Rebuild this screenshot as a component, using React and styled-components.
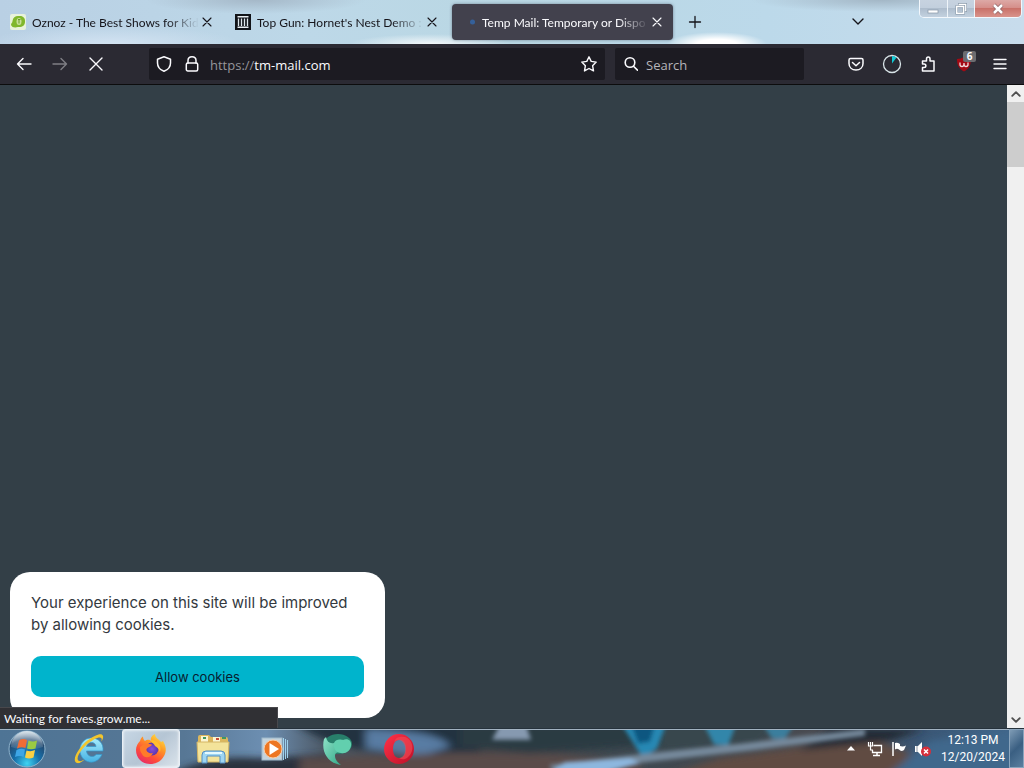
import React from 'react';
import styled, { createGlobalStyle, css } from 'styled-components';

const GlobalStyle = createGlobalStyle`
  * { box-sizing: border-box; }
  body { margin: 0; font-family: Lato, "Open Sans", sans-serif; font-size: 12px; }
  button, input { font: inherit; color: inherit; margin: 0; padding: 0; border: 0; background: none; }
  svg { display: block; flex: none; }
`;

const Desktop = styled.div`
  display: flex;
  flex-direction: column;
  min-height: 100vh;
`;

const TabStrip = styled.header`
  display: flex;
  align-items: flex-start;
  height: 44px;
  padding-left: 2px;
  background:
    radial-gradient(ellipse 130px 18px at 11% 100%, #d3e3f2 0, transparent 100%),
    radial-gradient(ellipse 80px 10px at 42% 100%, #f4f8fa 0, transparent 100%),
    radial-gradient(ellipse 50px 12px at 70% 100%, #ffffff 40%, transparent 100%),
    radial-gradient(ellipse 110px 14px at 25% 0%, #a5b8c8 0, transparent 100%),
    radial-gradient(ellipse 130px 12px at 86% 0%, #a3b7c6 0, transparent 100%),
    linear-gradient(90deg, #b9d0e4 0%, #bdd8e8 30%, #b9d7e3 50%, #bcd9ea 75%, #c8dcec 100%);
`;

const TabList = styled.div`
  display: flex;
  gap: 4px;
  min-width: 0;
  padding-top: 4px;
`;

const Tab = styled.div`
  display: flex;
  align-items: center;
  gap: 6px;
  flex: 0 1 221px;
  width: 221px;
  height: 36px;
  padding: 0 8px;
  border-radius: 4px;
  color: #15141a;
  ${(p) => p.$active && css`
    background: #42414d;
    color: #fbfbfe;
    box-shadow: 0 0 3px rgba(40, 50, 70, 0.5);
  `}
`;

const TabTitle = styled.span`
  flex: 1;
  min-width: 0;
  overflow: hidden;
  white-space: nowrap;
  padding-top: 2px;
  line-height: 20px;
  mask-image: linear-gradient(90deg, #000 calc(100% - 32px), transparent);
`;

const CloseButton = styled.button`
  display: grid;
  place-items: center;
  width: 16px;
  height: 16px;
  margin-left: -6px;
`;

const StripButton = styled.button`
  display: grid;
  place-items: center;
  width: 36px;
  height: 36px;
  margin-top: 4px;
  margin-left: 4px;
  color: #15141a;
`;

const StripSpace = styled.div`
  flex: ${(p) => p.$grow || 0} 1 ${(p) => p.$basis}px;
`;

const WindowControls = styled.div`
  display: flex;
  width: 103px;
  height: 18px;
  margin-right: 2px;
  border: 1px solid #f2f7fc;
  border-top: 0;
  border-radius: 0 0 5px 5px;
  overflow: hidden;
`;

const WindowButton = styled.button`
  display: grid;
  place-items: center;
  flex: ${(p) => (p.$danger ? 46 : 27)};
  border-right: ${(p) => (p.$danger ? '0' : '1px solid #eef4f9')};
  background: ${(p) => (p.$danger
    ? 'linear-gradient(#dda9a6 0, #d58f8a 45%, #c97169 50%, #d9938b 100%)'
    : 'linear-gradient(#c7d3e0 0, #c2cfdd 45%, #aebdcd 50%, #c3d1df 100%)')};
`;

const Toolbar = styled.nav`
  display: flex;
  align-items: center;
  height: 41px;
  padding: 0 6px;
  background: #2b2a33;
  border-bottom: 1px solid #0c0c0d;
  color: #fbfbfe;
`;

const ToolButton = styled.button`
  position: relative;
  display: grid;
  place-items: center;
  width: 36px;
  height: 32px;
  opacity: ${(p) => (p.disabled ? 0.4 : 1)};
`;

const Badge = styled.span`
  position: absolute;
  top: 3px;
  right: 6px;
  width: 13px;
  height: 11px;
  border-radius: 2px;
  background: #6c6c70;
  font-family: "Open Sans", sans-serif;
  font-size: 10px;
  font-weight: 700;
  line-height: 11px;
  text-align: center;
`;

const Field = styled.form`
  display: flex;
  align-items: center;
  gap: ${(p) => p.$gap}px;
  height: 32px;
  padding: 0 8px 0 7px;
  border-radius: 2px;
  background: #1c1b22;
  font-family: "Open Sans", sans-serif;
  font-size: 13px;
  flex: ${(p) => (p.$grow ? '1 1 0' : '0 1 189px')};
  min-width: 0;
`;

const FieldIcons = styled.span`
  display: flex;
  gap: 12px;
`;

const FieldInput = styled.input`
  flex: 1;
  min-width: 0;
  padding-top: 2px;
  outline: 0;
  &::placeholder { color: #b5b5ba; opacity: 1; }
`;

const Address = styled.a`
  flex: 1;
  min-width: 0;
  overflow: hidden;
  padding-top: 2px;
  color: #fbfbfe;
  text-decoration: none;
  white-space: nowrap;
`;

const Scheme = styled.span`
  color: #96969c;
`;

const ToolSpace = styled.div`
  flex: 0 1 ${(p) => p.$size}px;
`;

const Viewport = styled.main`
  position: relative;
  display: flex;
  flex: 1;
  justify-content: flex-end;
  background: #333f47;
`;

const Scrollbar = styled.div`
  display: flex;
  flex-direction: column;
  width: 17px;
  background: #f0f0f0;
  color: #505050;
`;

const ScrollButton = styled.button`
  display: grid;
  place-items: center;
  height: 17px;
`;

const Thumb = styled.div`
  height: 65px;
  background: #cdcdcd;
`;

const ScrollTrack = styled.div`
  flex: 1;
`;

const CookieCard = styled.section`
  position: absolute;
  left: 10px;
  bottom: 10px;
  width: 375px;
  padding: 20px 21px 21px;
  border-radius: 20px;
  background: #fff;
  color: #333940;
  font-family: Inter, sans-serif;
`;

const CookieText = styled.p`
  margin: 0 0 20px;
  font-size: 15px;
  line-height: 22px;
`;

const AllowButton = styled.button`
  display: block;
  width: 100%;
  height: 41px;
  border-radius: 10px;
  background: #00b4cc;
  color: #081c30;
  font-size: 13px;
`;

const StatusBubble = styled.div`
  position: absolute;
  left: 0;
  bottom: 0;
  width: 278px;
  height: 21px;
  padding-left: 4px;
  border-top: 1px solid #48484c;
  border-right: 1px solid #48484c;
  background: #303034;
  color: #fbfbfe;
  line-height: 21px;
`;

const Taskbar = styled.footer`
  position: relative;
  display: flex;
  align-items: stretch;
  height: 40px;
  border-top: 1px solid #26323c;
  background: #3f4d5a;
  color: #fff;
  overflow: hidden;
`;

const Wallpaper = styled.svg`
  position: absolute;
  inset: 0;
  width: 100%;
  height: 100%;
`;

const TaskItems = styled.div`
  position: relative;
  display: flex;
  flex: 1;
  gap: 4px;
`;

const TaskButton = styled.button`
  display: grid;
  place-items: center;
  width: 58px;
  ${(p) => p.$active && css`
    border: 1px solid #e7eef5;
    border-radius: 3px;
    background: linear-gradient(135deg, #c7d7e5, #b5c5d4 50%, #dae3eb);
    box-shadow: inset 0 0 3px #fff;
  `}
`;

const StartButton = styled(TaskButton)`
  width: 56px;
  padding-right: 2px;
`;

const Tray = styled.div`
  position: relative;
  display: flex;
  align-items: center;
`;

const TrayButton = styled.button`
  display: grid;
  place-items: center;
  width: 24px;
  height: 24px;
`;

const Clock = styled.time`
  width: 70px;
  margin-left: 3px;
  font-family: Roboto, sans-serif;
  line-height: 17px;
  text-align: center;
  white-space: nowrap;
`;

const ShowDesktop = styled.button`
  align-self: stretch;
  width: 15px;
  margin-left: 1px;
  border: 1px solid #8aa5bd;
  background: linear-gradient(135deg, #7e9bb5, #3a5f82 50%, #5b7f9f);
`;

const Stroke = ({ size = 16, width = 1.4, children, ...rest }) => (
  <svg width={size} height={size} viewBox="0 0 16 16" fill="none" stroke="currentColor"
    strokeWidth={width} strokeLinecap="round" strokeLinejoin="round" {...rest}>{children}</svg>
);

const CrossIcon = () => <Stroke width={1.1}><path d="M4 4l8 8M12 4l-8 8" /></Stroke>;

const OznozIcon = () => (
  <svg width="16" height="16" viewBox="0 0 16 16">
    <rect width="16" height="16" rx="2" fill="#e8f2da" />
    <path d="M1 11C1 9 2.500 9 2.500 7C3 3 6 1.500 9 2C13 1.500 15.500 4 15 8C15 11.500 12 13.500 8 13C5 14 2 13.500 1 11Z" fill="#80b72b" />
    <ellipse cx="9" cy="7.500" rx="2.500" ry="3.500" fill="#c7df97" />
    <path d="M8 5.500h2.500M9 5.500v4" stroke="#6a9c25" fill="none" />
  </svg>
);

const ArchiveIcon = () => (
  <svg width="16" height="16" viewBox="0 0 16 16">
    <rect width="16" height="16" fill="#111318" />
    <path d="M2.500 2H13.500V3.500H2.500ZM2.500 12.500H13.500V14H2.500Z" fill="#e9eef2" />
    <path d="M3.500 4.500V12M6.500 4.500V12M9.500 4.500V12M12.500 4.500V12" stroke="#dfe6eb" strokeWidth="1.300" />
  </svg>
);

const LoadingDot = () => (
  <svg width="16" height="16" viewBox="0 0 16 16"><circle cx="12.500" cy="8" r="2.500" fill="#35609a" /></svg>
);

const StartOrb = () => (
  <svg width="38" height="38" viewBox="0 0 38 38">
    <defs>
      <radialGradient id="orb" cx=".5" cy=".9" r=".9">
        <stop offset="0" stopColor="#3fd4f2" /><stop offset=".4" stopColor="#1670ab" />
        <stop offset=".75" stopColor="#24496f" /><stop offset="1" stopColor="#a9c2d3" />
      </radialGradient>
      <linearGradient id="orbShine" x1="0" y1="0" x2="0" y2="1">
        <stop offset="0" stopColor="#fff" stopOpacity=".6" /><stop offset="1" stopColor="#fff" stopOpacity=".05" />
      </linearGradient>
    </defs>
    <circle cx="19" cy="19" r="18" fill="url(#orb)" stroke="#8fb3cb" strokeWidth="1" />
    <path d="M3 17A16 16 0 0 1 35 17Q19 23 3 17Z" fill="url(#orbShine)" />
    <path d="M11 10.500Q15 8 19 10L17.500 18Q13 16.500 9 18.500Z" fill="#ef6c35" />
    <path d="M20.500 10.500Q25 12.500 29 10.500L27.500 18.500Q23 20 19 18.500Z" fill="#9acb43" />
    <path d="M8.500 20Q13 18 17 19.500L15.500 27Q11.500 25 7 27Z" fill="#3ea6e6" />
    <path d="M18.500 20.500Q23 22 27 20L25.500 27.500Q21 29.500 17 27.500Z" fill="#fbd044" />
  </svg>
);

const ExplorerEIcon = () => (
  <svg width="34" height="34" viewBox="0 0 34 34">
    <defs>
      <linearGradient id="ie" x1="0" y1="0" x2="0" y2="1">
        <stop offset="0" stopColor="#a8ecfb" /><stop offset="1" stopColor="#45b2e4" />
      </linearGradient>
    </defs>
    <path d="M31 19H14.500C15 25 22 26 24 22.500H30C27 29 21 31.500 15.500 29.500C4 25 6 7 18.500 6C26 5.500 32 11 31 19ZM14.500 14.500H24C23.500 9 15.500 9 14.500 14.500Z" fill="url(#ie)" stroke="#3498cc" strokeWidth=".7" />
    <path d="M5 31C-1 29 6 16 16 8C23 3 30 0 31 4C31.500 6 30.500 8 29.500 9.500C30.500 5 28 4.500 22 7.500C11 13 2 27 7 29C9 29.500 11 28.500 12.500 27.500C10 30 7 31.700 5 31Z" fill="#f2c52c" />
  </svg>
);

const FirefoxIcon = () => (
  <svg width="32" height="32" viewBox="0 0 32 32">
    <defs>
      <linearGradient id="fox" x1=".85" y1="0" x2=".2" y2="1">
        <stop offset="0" stopColor="#ffe94a" /><stop offset=".35" stopColor="#ff9a25" />
        <stop offset=".7" stopColor="#ff4c38" /><stop offset="1" stopColor="#e4286d" />
      </linearGradient>
      <radialGradient id="foxGlobe"><stop offset="0" stopColor="#8b4fd8" /><stop offset="1" stopColor="#5635ad" /></radialGradient>
    </defs>
    <path d="M5 8C6 5 7 4 8 3.500C8 6 9 7 10 8C13 6 15 7 16 8C15 4 18 2 20 1C20 5 24 6 26 9L28 8C31 13 32 18 29 23C26 29 20 31 15 31C7 31 1 25 1 17C1 13 3 10 5 8Z" fill="url(#fox)" />
    <circle cx="17" cy="16" r="6.500" fill="url(#foxGlobe)" />
    <path d="M5 14C8 11 11 10 13 11C15 11 17 11 17 12C15 14 13 14 11.500 16C11 19 15 21 18 20C16 25 9 26 7 21C5 19 5 16 5 14Z" fill="#ff7a2a" />
    <path d="M16 7C23 7 27 13 25 19C24 16 22 14 20 13C19 10 16 10 16 7Z" fill="#ffbf2e" />
  </svg>
);

const FolderIcon = () => (
  <svg width="34" height="32" viewBox="0 0 34 32">
    <path d="M2 4Q2 2 4 2H13L15 4H30Q32 4 32 6V29H2Z" fill="#dcb75d" />
    <path d="M5 3H12V9H5ZM17 4H24V9H17Z" fill="#fbf5d1" />
    <path d="M7 5H10M26 5H30" stroke="#409762" strokeWidth="2" />
    <path d="M20 6H23" stroke="#c74c37" strokeWidth="2" />
    <path d="M1 9H33L32 29H2Z" fill="#f3e39a" stroke="#d4b565" />
    <path d="M6 30V22Q6 18 10 18H25Q29 18 29 22V30H24V23H11V30Z" fill="#9ed6f3" stroke="#538ec1" />
    <path d="M9 20H26" stroke="#e5faff" strokeWidth="2" />
  </svg>
);

const MediaIcon = () => (
  <svg width="28" height="26" viewBox="0 0 28 26">
    <rect x="1" y="2" width="20" height="22" fill="#c3d3dd" stroke="#9fbacb" />
    <path d="M22.500 2V24M24.500 3V23M26.500 4V22" stroke="#9fd2ed" />
    <circle cx="12" cy="13" r="9" fill="#ed7622" stroke="#f9cda6" />
    <path d="M8.500 7L18 13L8.500 19Z" fill="#fff" />
  </svg>
);

const GlobeBirdIcon = () => (
  <svg width="32" height="34" viewBox="0 0 32 34">
    <defs><linearGradient id="bird" x1="0" y1="0" x2="1" y2="1"><stop offset="0" stopColor="#8fe3c8" /><stop offset="1" stopColor="#34a888" /></linearGradient></defs>
    <ellipse cx="17" cy="12" rx="14" ry="10" fill="#287f6b" />
    <path d="M3 7C0 19 6 31 20 33C16 30 14 27 14 24C14 21 16 20 19 20C15 18 13 15 13 11C9 12 6 10 5 5Z" fill="url(#bird)" />
    <path d="M13 11C15 6 21 8 22 8C27 6 31 9 30 14C29 19 25 22 20 21C15 21 12 16 13 11Z" fill="#62cfae" />
  </svg>
);

const OperaIcon = () => (
  <svg width="32" height="32" viewBox="0 0 32 32">
    <defs><linearGradient id="opera" x1="0" y1="0" x2="1" y2="1"><stop offset="0" stopColor="#ff3248" /><stop offset="1" stopColor="#bc1028" /></linearGradient></defs>
    <path fillRule="evenodd" d="M16 1A15 15 0 1 0 16 31A15 15 0 1 0 16 1ZM16 7C20 6 23 10 23 16C23 22 20 26 16 25C12 25 10 21 10 16C10 11 12 7 16 7Z" fill="url(#opera)" />
    <path d="M17 4C26 2 31 11 29 18C26 26 20 28 16 25C24 25 25 9 16 7Q13 7 11 9Q13 4 17 4Z" fill="#f04a55" opacity=".65" />
  </svg>
);

const TaskbarScenery = () => (
  <Wallpaper viewBox="0 0 1024 40" preserveAspectRatio="none" aria-hidden="true">
    <defs>
      <linearGradient id="sky" x1="0" x2="1">
        <stop offset="0" stopColor="#4e7495" /><stop offset=".18" stopColor="#577795" />
        <stop offset=".26" stopColor="#6d8fb2" /><stop offset=".32" stopColor="#4b5662" />
        <stop offset=".45" stopColor="#434448" /><stop offset=".6" stopColor="#3d4850" />
        <stop offset=".8" stopColor="#494a50" /><stop offset=".9" stopColor="#3a5674" /><stop offset="1" stopColor="#41678c" />
      </linearGradient>
      <filter id="soft" x="-5%" y="-50%" width="110%" height="200%"><feGaussianBlur stdDeviation="4" /></filter>
      <filter id="fine" x="-5%" y="-50%" width="110%" height="200%"><feGaussianBlur stdDeviation="2" /></filter>
    </defs>
    <rect width="1024" height="40" fill="url(#sky)" />
    <g filter="url(#soft)">
      <path d="M165 50Q205 25 260 30L330 26V50Z" fill="#2c323c" />
      <path d="M294 -6H480V28Q350 34 294 -6Z" fill="#22333f" />
      <path d="M366 0Q440 2 450 18L420 28L366 20Z" fill="#587ca3" />
      <path d="M300 30L460 24L560 26L640 34V50H300Z" fill="#5a4c4a" />
      <path d="M460 -6H660V16L530 25L460 18Z" fill="#2b3a42" />
      <path d="M660 50L720 30L870 10L910 24L900 50Z" fill="#604c43" />
      <path d="M660 -6H780L760 16L660 24Z" fill="#37464e" />
      <path d="M830 0H925L890 12L800 22Z" fill="#242c36" />
      <path d="M885 50L930 12L1030 0V50Z" fill="#3f678c" />
    </g>
    <g filter="url(#fine)">
      <path d="M500 -4H526L531 11H492Z" fill="#8699b0" />
      <path d="M622 -4H666L657 20L643 30Z" fill="#2788b4" />
      <path d="M631 -4H655L650 13L638 15Z" fill="#115780" />
      <path d="M704 -4H736L728 17L714 16Z" fill="#3186aa" />
      <path d="M763 -4H794L785 10H772Z" fill="#3a7e9d" />
      <path d="M550 37L665 23L740 15L865 0V7L750 22L645 34L600 40H550Z" fill="#76899b" />
      <path d="M550 44L565 34L630 30L640 35L600 46Z" fill="#8db7df" />
    </g>
    <path d="M0 .5H1024" stroke="#a6b7c5" />
  </Wallpaper>
);

const tabs = [
  { title: 'Oznoz - The Best Shows for Kid', icon: <OznozIcon /> },
  { title: "Top Gun: Hornet's Nest Demo :", icon: <ArchiveIcon /> },
  { title: 'Temp Mail: Temporary or Dispo', icon: <LoadingDot />, active: true },
];

const apps = [
  { name: 'Internet Explorer', icon: <ExplorerEIcon /> },
  { name: 'Firefox', icon: <FirefoxIcon />, active: true },
  { name: 'File Explorer', icon: <FolderIcon /> },
  { name: 'Media Player', icon: <MediaIcon /> },
  { name: 'Web browser', icon: <GlobeBirdIcon /> },
  { name: 'Opera', icon: <OperaIcon /> },
];

export default function App() {
  return (
    <Desktop>
      <GlobalStyle />
      <TabStrip>
        <TabList>
          {tabs.map((t) => (
            <Tab key={t.title} $active={t.active}>
              {t.icon}
              <TabTitle>{t.title}</TabTitle>
              <CloseButton aria-label="Close tab"><CrossIcon /></CloseButton>
            </Tab>
          ))}
        </TabList>
        <StripButton aria-label="New tab"><Stroke width={1.3}><path d="M8 2.500v11M2.500 8h11" /></Stroke></StripButton>
        <StripSpace $grow={1} $basis={0} />
        <StripButton aria-label="List all tabs"><Stroke><path d="M3 5l5 5 5-5" /></Stroke></StripButton>
        <StripSpace $basis={43} />
        <WindowControls>
          <WindowButton aria-label="Minimize">
            <svg width="14" height="12" viewBox="0 0 14 12"><rect x="2" y="7" width="10" height="3" fill="#fff" stroke="#8796a6" strokeWidth=".7" /></svg>
          </WindowButton>
          <WindowButton aria-label="Restore">
            <svg width="12" height="12" viewBox="0 0 14 14" fill="none">
              <path d="M5 3V1.500H12.500V9H10" stroke="#8a9aaa" strokeWidth="3" /><path d="M5 3V1.500H12.500V9H10" stroke="#fff" strokeWidth="1.500" />
              <rect x="2" y="4" width="8" height="8" stroke="#8a9aaa" strokeWidth="3" /><rect x="2" y="4" width="8" height="8" stroke="#fff" strokeWidth="1.700" />
            </svg>
          </WindowButton>
          <WindowButton $danger aria-label="Close">
            <svg width="14" height="14" viewBox="0 0 14 14"><path d="M3 3l8 8M11 3l-8 8" stroke="#8d6466" strokeWidth="4" /><path d="M3 3l8 8M11 3l-8 8" stroke="#fff" strokeWidth="2.500" /></svg>
          </WindowButton>
        </WindowControls>
      </TabStrip>

      <Toolbar>
        <ToolButton aria-label="Back"><Stroke><path d="M15 8H1.500M7 2.500L1.500 8L7 13.500" /></Stroke></ToolButton>
        <ToolButton aria-label="Forward" disabled><Stroke><path d="M1 8H14.500M9 2.500L14.500 8L9 13.500" /></Stroke></ToolButton>
        <ToolButton aria-label="Stop"><Stroke><path d="M2 2l12 12M14 2L2 14" /></Stroke></ToolButton>
        <ToolSpace $size={35} />
        <Field as="div" $grow $gap={10}>
          <FieldIcons>
            <Stroke width={1.5}><path d="M8 .8L14.500 3.200V7C14.500 11 12 13.800 8 15.300C4 13.800 1.500 11 1.500 7V3.200Z" /></Stroke>
            <Stroke width={1.5}><path d="M4 7V4.500C4 -.5 12 -.5 12 4.500V7" /><rect x="2.300" y="7" width="11.400" height="8" rx="1.500" /></Stroke>
          </FieldIcons>
          <Address href="https://tm-mail.com"><Scheme>https://</Scheme>tm-mail.com</Address>
          <Stroke width={1.4}><path d="M8 .8L10.200 5.400L15.200 6.100L11.600 9.700L12.500 14.900L8 12.500L3.500 14.900L4.400 9.700L.8 6.100L5.800 5.400Z" /></Stroke>
        </Field>
        <ToolSpace $size={10} />
        <Field $gap={8} onSubmit={(e) => e.preventDefault()}>
          <Stroke width={1.6}><circle cx="8" cy="6.500" r="4.800" /><path d="M11.500 10.200l4 4" /></Stroke>
          <FieldInput aria-label="Search" placeholder="Search" />
        </Field>
        <ToolSpace $size={34} />
        <ToolButton aria-label="Save to Pocket"><Stroke width={1.5}><path d="M2.500 2.500H13.500Q15 2.500 15 4V7.500C15 11.500 12 14 8 14C4 14 1 11.500 1 7.500V4Q1 2.500 2.500 2.500Z" /><path d="M4.500 6.500L8 9.800L11.500 6.500" /></Stroke></ToolButton>
        <ToolButton aria-label="Timer">
          <svg width="20" height="20" viewBox="0 0 20 20"><circle cx="10" cy="10" r="8.500" fill="none" stroke="#d9e4e8" strokeWidth="1.300" /><path d="M10 9.500V2Q12.500 2 14.500 3.500Z" fill="#12c9d4" /></svg>
        </ToolButton>
        <ToolButton aria-label="Extensions"><Stroke width={1.5}><path d="M2.500 7V5H6.500V3C6.500 .3 10 .3 10 3V5H14V15H2.500V11.500H4C6.500 11.500 6.500 8 4 8H2.500Z" /></Stroke></ToolButton>
        <ToolButton aria-label="Content blocker">
          <svg width="16" height="16" viewBox="0 0 16 16"><path d="M8 1Q12 3 15 3C15 9 13 13 8 15.500C3 13 1 9 1 3Q5 3 8 1Z" fill="#a40a14" /><path d="M4 6.500V8.500Q4 10.500 6 10.500Q8 10.500 8 8V7V8Q8 10.500 10 10.500Q12 10.500 12 8.500V6.500" fill="none" stroke="#f2dedf" strokeWidth="1.300" /></svg>
          <Badge>6</Badge>
        </ToolButton>
        <ToolButton aria-label="Open application menu"><Stroke><path d="M2 3.500H14M2 8H14M2 12.500H14" /></Stroke></ToolButton>
      </Toolbar>

      <Viewport>
        <CookieCard aria-label="Cookie consent">
          <CookieText>Your experience on this site will be improved by allowing cookies.</CookieText>
          <AllowButton>Allow cookies</AllowButton>
        </CookieCard>
        <StatusBubble>Waiting for faves.grow.me...</StatusBubble>
        <Scrollbar>
          <ScrollButton aria-label="Scroll up"><Stroke size={12} width={2.5}><path d="M3 10.500l5-5 5 5" /></Stroke></ScrollButton>
          <Thumb />
          <ScrollTrack />
          <ScrollButton aria-label="Scroll down"><Stroke size={12} width={2.5}><path d="M3 5.500l5 5 5-5" /></Stroke></ScrollButton>
        </Scrollbar>
      </Viewport>

      <Taskbar>
        <TaskbarScenery />
        <TaskItems>
          <StartButton aria-label="Start"><StartOrb /></StartButton>
          {apps.map((a) => <TaskButton key={a.name} aria-label={a.name} $active={a.active}>{a.icon}</TaskButton>)}
        </TaskItems>
        <Tray>
          <TrayButton aria-label="Show hidden icons"><svg width="8" height="5" viewBox="0 0 8 5"><path d="M4 0L8 4.500H0Z" fill="#fff" /></svg></TrayButton>
          <TrayButton aria-label="Network">
            <svg width="16" height="16" viewBox="0 0 16 16" fill="none" stroke="#fff"><path d="M6.500 4.500H14.500V11.500H5.500V9" strokeWidth="1.300" /><path d="M10 12V14M6 14.500H13" strokeWidth="1.500" /><path d="M1.500 1V5H5.500V1M3.500 1V9H6" strokeWidth="1.200" /></svg>
          </TrayButton>
          <TrayButton aria-label="Action center">
            <svg width="16" height="16" viewBox="0 0 16 16"><path d="M2 1V15" stroke="#fff" strokeWidth="1.500" /><path d="M4 2Q6 1 9 3V5Q12 6 15 4.500L13 9Q10 11 8 8.500Q6 7 4 8.500Z" fill="#fff" /></svg>
          </TrayButton>
          <TrayButton aria-label="Volume muted">
            <svg width="18" height="16" viewBox="0 0 18 16"><path d="M1 5H4L8 1V15L4 11H1Z" fill="#fff" /><path d="M3 5V11" stroke="#8d98a3" /><circle cx="12" cy="10.500" r="5" fill="#d62f3b" /><path d="M10 8.500L14 12.500M14 8.500L10 12.500" stroke="#fff" strokeWidth="1.500" /></svg>
          </TrayButton>
          <Clock dateTime="2024-12-20T12:13">12:13 PM<br />12/20/2024</Clock>
          <ShowDesktop aria-label="Show desktop" />
        </Tray>
      </Taskbar>
    </Desktop>
  );
}
